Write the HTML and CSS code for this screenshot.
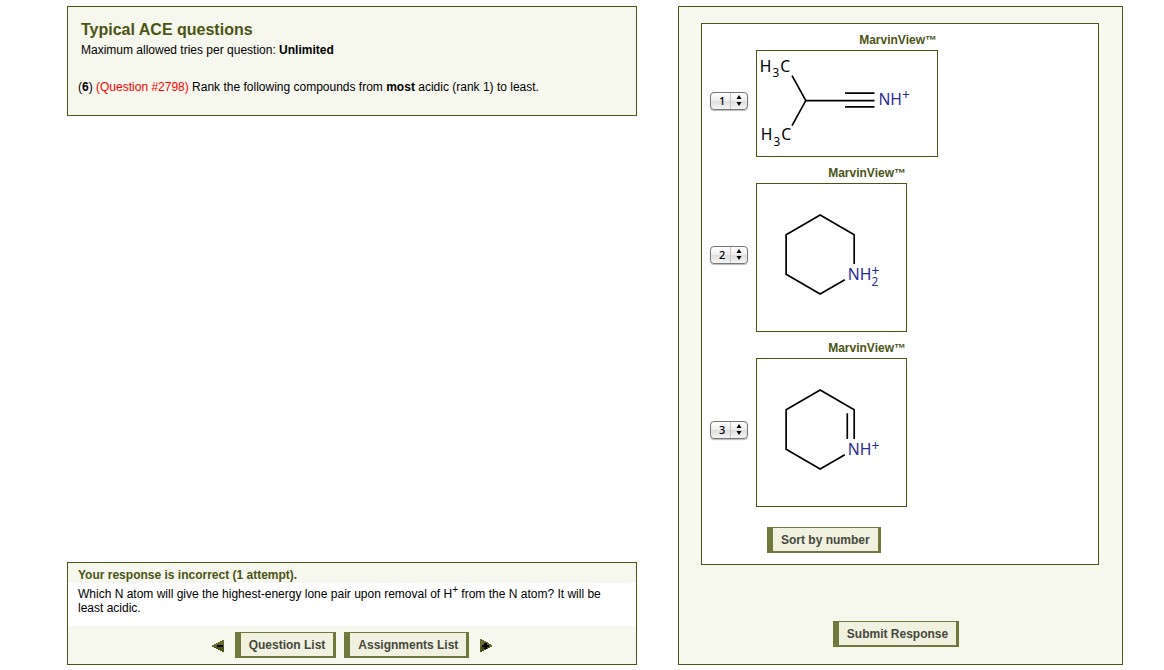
FILE: index.html
```html
<!DOCTYPE html>
<html lang="en">
<head>
<meta charset="utf-8">
<title>Typical ACE questions</title>
<link rel="stylesheet" href="styles.css">
</head>
<body>
<main class="page">
  <div class="column">
    <section class="panel intro">
      <h1 class="title">Typical ACE questions</h1>
      <p class="tries">Maximum allowed tries per question: <b>Unlimited</b></p>
      <p class="question">(<b>6</b>) <span class="question-id">(Question #2798)</span> Rank the following compounds from <b>most</b> acidic (rank 1) to least.</p>
    </section>

    <section class="panel feedback">
      <h2 class="verdict">Your response is incorrect (1 attempt).</h2>
      <p class="hint">Which N atom will give the highest-energy lone pair upon removal of H<sup>+</sup> from the N atom? It will be least acidic.</p>
      <nav class="nav">
        <button class="arrow" type="button" aria-label="Previous question">
          <svg width="12" height="13" viewBox="0 0 12 13" shape-rendering="crispEdges">
            <path d="M0 6h2V5h2V4h2V3h2V2h2V1h2v12h-2v-1H8v-1H6v-1H4V9H2V8H0z" fill="#68692b"/>
            <path d="M2 8h10v5h-2v-1H8v-1H6v-1H4V9H2z" fill="#4b5414"/>
            <path d="M5 6h6v2H5z" fill="#000"/>
          </svg>
        </button>
        <div class="nav-lists">
          <button class="btn" type="button">Question List</button>
          <button class="btn" type="button">Assignments List</button>
        </div>
        <button class="arrow" type="button" aria-label="Next question">
          <svg width="12" height="13" viewBox="0 0 12 13" shape-rendering="crispEdges">
            <path d="M0 0h2v1h2v1h2v1h2v1h1v1h2v1h1v2h-2v1H8v1H6v1H4v1H2v1H0z" fill="#68692b"/>
            <path d="M0 8h10v1H8v1H6v1H4v1H2v1H0z" fill="#4b5414"/>
            <path d="M4 4h3v2h2v2H7v2H4V8H2V6h2z" fill="#000"/>
          </svg>
        </button>
      </nav>
    </section>
  </div>

  <form class="panel response">
    <div class="answers">
      <div class="item">
        <label class="caption" for="rank1">MarvinView™</label>
        <span class="rank">
          <select class="rank-select" id="rank1"><option selected>1</option><option>2</option><option>3</option></select>
          <svg class="rank-arrows" width="6" height="11" viewBox="0 0 6 11"><path d="M3 0l2.500 4h-5zM3 11l2.500-4h-5z"/></svg>
        </span>
        <svg class="molecule" width="182" height="107" viewBox="-1 -1 182 107">
          <path class="bond" d="M34 24l14 25.500L34 75M48 49.500h70M88 42h30M88 56h30"/>
          <text x="1" y="20">H</text><text class="small" x="14" y="26">3</text><text x="22" y="20">C</text>
          <text x="2" y="90">H</text><text class="small" x="15" y="96">3</text><text x="23" y="90">C</text>
          <text class="nitrogen" x="122" y="54">NH</text><text class="nitrogen charge" x="146" y="49">+</text>
        </svg>
      </div>

      <div class="item">
        <label class="caption" for="rank2">MarvinView™</label>
        <span class="rank">
          <select class="rank-select" id="rank2"><option>1</option><option selected>2</option><option>3</option></select>
          <svg class="rank-arrows" width="6" height="11" viewBox="0 0 6 11"><path d="M3 0l2.500 4h-5zM3 11l2.500-4h-5z"/></svg>
        </span>
        <svg class="molecule" width="151" height="149" viewBox="-1 -1 151 149">
          <path class="bond" d="M97.500 80V50.500L63 30.500l-34.500 20v40l34.500 20L88 96"/>
          <text class="nitrogen" x="91" y="96">NH</text><text class="nitrogen charge" x="115" y="92">+</text><text class="nitrogen small" x="115" y="102">2</text>
        </svg>
      </div>

      <div class="item">
        <label class="caption" for="rank3">MarvinView™</label>
        <span class="rank">
          <select class="rank-select" id="rank3"><option>1</option><option>2</option><option selected>3</option></select>
          <svg class="rank-arrows" width="6" height="11" viewBox="0 0 6 11"><path d="M3 0l2.500 4h-5zM3 11l2.500-4h-5z"/></svg>
        </span>
        <svg class="molecule" width="151" height="149" viewBox="-1 -1 151 149">
          <path class="bond" d="M97.500 80V50.500L63 30.500l-34.500 20v40l34.500 20L88 96M90.500 54v26"/>
          <text class="nitrogen" x="91" y="96">NH</text><text class="nitrogen charge" x="115" y="92">+</text>
        </svg>
      </div>

      <button class="btn sort" type="button">Sort by number</button>
    </div>
    <button class="btn submit" type="button">Submit Response</button>
  </form>
</main>
</body>
</html>
```

FILE: styles.css
```css
* {
  box-sizing: border-box;
}

body {
  margin: 0;
  background: #fff;
  color: #000;
  font: 12px/14px "Liberation Sans", Arial, sans-serif;
}

h1, h2, p {
  margin: 0;
}

.page {
  display: grid;
  grid-template-columns: 570fr 445fr;
  gap: 41px;
  min-height: 100vh;
  padding: 6px 41px 5px 67px;
}

.column {
  display: flex;
  flex-direction: column;
  justify-content: space-between;
}

.panel {
  border: 1px solid #4b5414;
  background: #f6f7ed;
}

.intro {
  padding: 12px 10px 21px;
}

.title {
  padding-left: 3px;
  color: #4b5414;
  font-size: 16px;
  line-height: 22px;
}

.tries {
  padding-left: 3px;
  margin-bottom: 21px;
  line-height: 18px;
}

.question-id {
  color: #f00;
}

.verdict {
  padding: 5px 10px 1px;
  color: #4b5414;
  font-size: 12px;
  line-height: 14px;
}

.hint {
  padding: 4px 10px 11px;
  background: #fff;
}

.hint sup {
  font-size: 10px;
  line-height: 0;
}

.nav {
  display: flex;
  justify-content: center;
  align-items: center;
  gap: 11px;
  padding: 6px 0;
}

.nav-lists {
  display: flex;
  gap: 8px;
}

.arrow {
  display: flex;
  padding: 0;
  border: 0;
  background: none;
}

.btn {
  padding: 5px 8px 4px;
  border: solid #6f783d;
  border-width: 1px 3px 2px 6px;
  border-radius: 0;
  background: #f0f2df;
  color: #46483c;
  font: bold 12px/14px "Liberation Sans", Arial, sans-serif;
}

.response {
  display: flex;
  flex-direction: column;
  justify-content: space-between;
  padding: 16px 23px 17px 22px;
}

.answers {
  display: flex;
  flex-direction: column;
  align-items: flex-start;
  gap: 9px;
  padding: 9px 8px 11px;
  border: 1px solid #4b5414;
  background: #fff;
}

.item {
  display: grid;
  grid-template-columns: 38px auto;
  column-gap: 8px;
  row-gap: 3px;
  align-items: center;
}

.caption {
  grid-column: 2;
  padding-right: 1px;
  color: #4b5414;
  font-weight: bold;
  text-align: right;
}

.rank {
  position: relative;
  display: flex;
  margin-bottom: 5px;
}

.rank-select {
  appearance: none;
  width: 100%;
  height: 18px;
  padding: 0 0 0 8px;
  border: 1px solid #777;
  border-radius: 4px;
  background:
    linear-gradient(#c4c4c4, #c4c4c4) 19px 0 / 1px 100% no-repeat,
    linear-gradient(#fff, #ededed 50%, #dedede 50%, #f5f5f5);
  box-shadow: 0 1px 1px #bbb;
  color: #000;
  font: 500 11px/16px "Noto Sans", sans-serif;
}

.rank-arrows {
  position: absolute;
  top: 3px;
  right: 6px;
  pointer-events: none;
}

.molecule {
  display: block;
  border: 1px solid #4b5414;
  background: #fff;
  font: 16px "Noto Sans", sans-serif;
}

.bond {
  fill: none;
  stroke: #000;
  stroke-width: 1.700;
}

.small {
  font-size: 12px;
}

.charge {
  font-size: 14px;
}

.nitrogen {
  fill: #2b2b96;
}

.sort {
  margin: 11px 0 0 57px;
}

.submit {
  align-self: center;
  margin-right: 8px;
}
```
